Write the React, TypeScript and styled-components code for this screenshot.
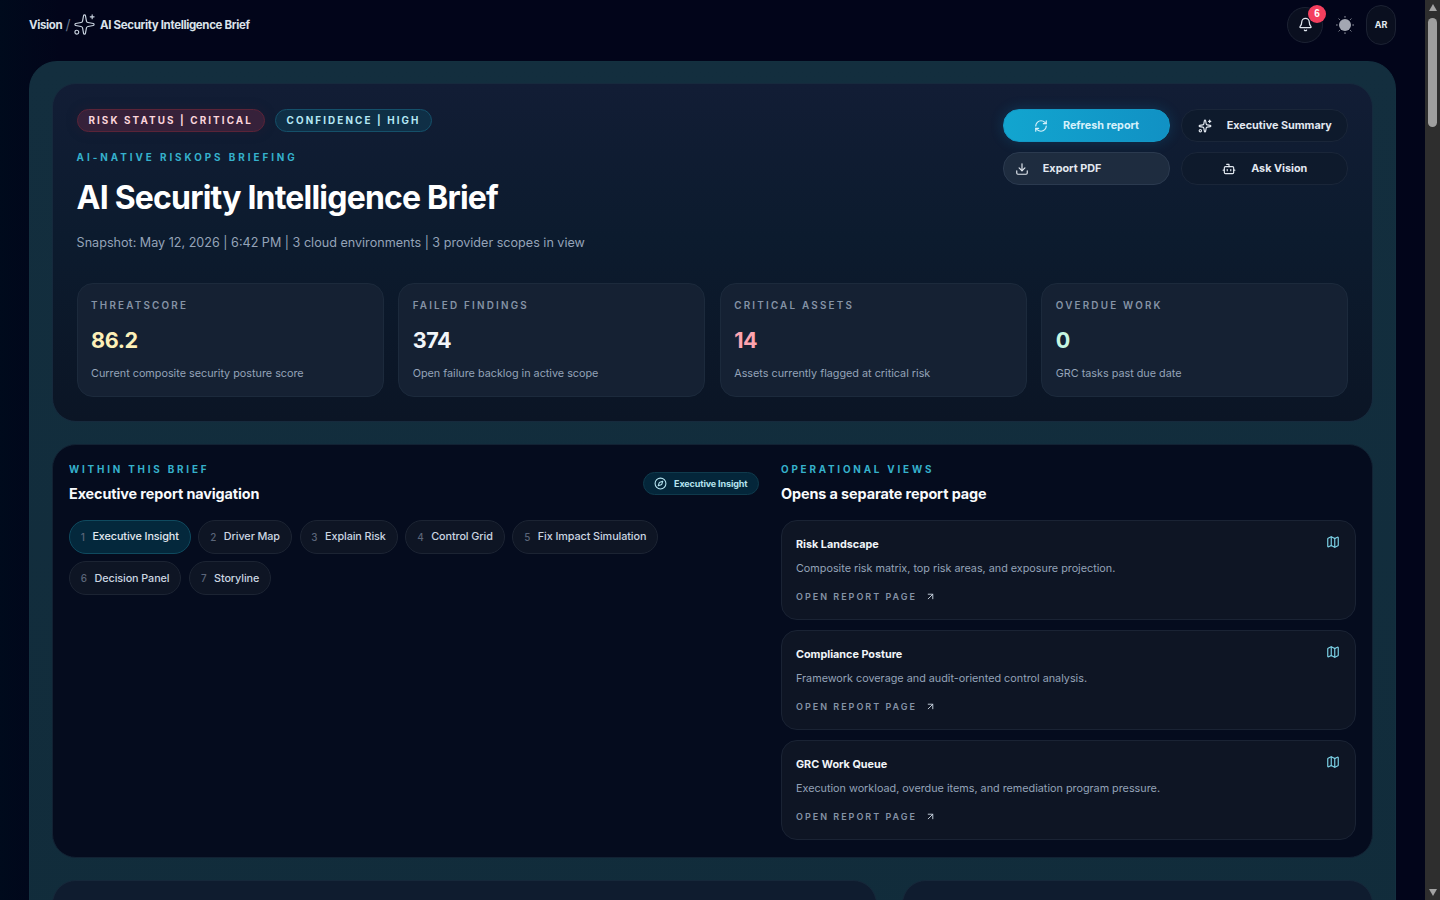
import React from "react";
import styled, { createGlobalStyle } from "styled-components";
import { Sparkles, Bell, RefreshCw, Download, Bot, Compass, Map as MapIcon, ArrowUpRight } from "lucide-react";

const Global = createGlobalStyle`
  html, body { margin: 0; padding: 0; background: #02051a; }
  body { font-family: Inter, "Liberation Sans", sans-serif; color: #e2e8f0; }
  * { box-sizing: border-box; }
`;

const Page = styled.div`
  background: linear-gradient(90deg, #000a1c 0, #02051a 60px, #02051a 100%);
  padding: 0 44px 0 29px;
`;
const ScrollTrack = styled.aside`
  position: fixed;
  top: 0;
  right: 0;
  bottom: 0;
  width: 15px;
  background: #2e2e2e;
  display: flex;
  flex-direction: column;
  align-items: center;
  padding: 4px 0;
`;
const ScrollArrow = styled.span<{ $down?: boolean }>`
  width: 0;
  height: 0;
  border-left: 4.5px solid transparent;
  border-right: 4.5px solid transparent;
  ${p => (p.$down ? "border-top: 7px solid #a3a3a3; margin-top: auto;" : "border-bottom: 7px solid #a3a3a3;")}
`;
const ScrollThumb = styled.span`
  width: 9px;
  height: 109px;
  margin-top: 7px;
  border-radius: 5px;
  background: #9f9f9f;
`;
const TopBar = styled.header`
  height: 61px;
  display: flex;
  align-items: center;
  justify-content: space-between;
  padding-bottom: 12px;
`;
const Crumbs = styled.nav`
  display: flex;
  align-items: center;
  font-size: 11.5px;
  font-weight: 700;
  letter-spacing: -0.35px;
  color: #dbe2ea;
  svg { color: #cbd5e1; margin: 0 4px 0 3px; }
`;
const Slash = styled.span`
  color: #64748b;
  font-weight: 400;
  margin-left: 3px;
  font-size: 14px;
`;
const TopActions = styled.div`
  display: flex;
  align-items: center;
`;
const RoundButton = styled.button`
  position: relative;
  width: 36px;
  height: 36px;
  border-radius: 50%;
  border: 1px solid #1c2233;
  background: #0a0f1f;
  color: #e2e8f0;
  display: grid;
  place-items: center;
  padding: 0;
`;
const Badge = styled.span`
  position: absolute;
  top: -3px;
  right: -4px;
  width: 18px;
  height: 18px;
  border-radius: 50%;
  background: #f43f5e;
  color: #fff;
  font-size: 10px;
  font-weight: 700;
  display: grid;
  place-items: center;
`;
const ThemeToggle = styled.span`
  width: 43px;
  display: grid;
  place-items: center;
`;
const Avatar = styled.div`
  width: 30px;
  height: 40px;
  border-radius: 15px;
  border: 1px solid #1c2233;
  background: #0a0f1f;
  color: #e2e8f0;
  font-size: 9px;
  font-weight: 700;
  display: grid;
  place-items: center;
`;
const Shell = styled.main`
  border-radius: 28px 28px 0 0;
  border: 1px solid #13303f;
  background: linear-gradient(180deg, #132e3e 0, #102b39 100%);
  padding: 21px 21.6px 24px;
  display: flex;
  flex-direction: column;
  gap: 22px;
`;
const Hero = styled.section`
  height: 339px;
  border-radius: 24px;
  border: 1px solid #162a3d;
  background: linear-gradient(180deg, #121d35 0, #0c1b2e 45%, #0b1525 100%);
  padding: 25px 24px 24px;
  display: flex;
  flex-direction: column;
`;
const HeroTop = styled.div`
  display: flex;
  justify-content: space-between;
  height: 174px;
`;
const HeroText = styled.div``;
const Pills = styled.div`
  display: flex;
  gap: 10px;
`;
const Pill = styled.span<{ $tone: "risk" | "info" }>`
  height: 22.5px;
  display: inline-flex;
  align-items: center;
  padding: 0 10.8px;
  border-radius: 12px;
  font-size: 9.9px;
  font-weight: 700;
  letter-spacing: 2.1px;
  border: 1px solid ${p => (p.$tone === "risk" ? "#5b2438" : "#15506a")};
  background: ${p => (p.$tone === "risk" ? "#36213a" : "#0f2f46")};
  color: ${p => (p.$tone === "risk" ? "#fbd5dc" : "#b5e8f5")};
  box-shadow: ${p => (p.$tone === "risk" ? "0 0 12px #3a1c3040" : "none")};
`;
const Eyebrow = styled.div`
  font-size: 9.9px;
  line-height: 12px;
  font-weight: 700;
  letter-spacing: 2.8px;
  color: #35b1cc;
`;
const HeroEyebrow = styled(Eyebrow)`
  margin-top: 19.5px;
  letter-spacing: 2.95px;
`;
const Title = styled.h1`
  margin: 13px 0 0;
  font-size: 32px;
  line-height: 44px;
  font-weight: 700;
  letter-spacing: -0.8px;
  color: #fff;
`;
const Snapshot = styled.p`
  margin: 13px 0 0;
  font-size: 12.6px;
  line-height: 20px;
  color: #94a3b8;
`;
const ActionGrid = styled.div`
  display: grid;
  width: 345.6px;
  grid-template-columns: 1fr 1fr;
  grid-auto-rows: 33px;
  gap: 10px 10.8px;
  align-content: start;
`;
const ActionButton = styled.button<{ $kind: "primary" | "soft" | "ghost" }>`
  border-radius: 16px;
  display: flex;
  align-items: center;
  justify-content: ${p => (p.$kind === "soft" ? "flex-start" : "center")};
  gap: ${p => (p.$kind === "soft" ? 14 : 15)}px;
  padding: 0 11px;
  font: 700 10.8px Inter, sans-serif;
  border: 1px solid ${p => (p.$kind === "primary" ? "#1398c6" : p.$kind === "soft" ? "#2b3a4f" : "#1a2639")};
  background: ${p =>
    p.$kind === "primary"
      ? "linear-gradient(90deg, #12a5cf, #1191c4)"
      : p.$kind === "soft"
        ? "#1e2c3f"
        : "#0e1a2c"};
  color: ${p => (p.$kind === "primary" ? "#d6f1fb" : "#e2e8f0")};
  box-shadow: ${p => (p.$kind === "primary" ? "0 0 14px #0ea5e930" : "none")};
`;
const Metrics = styled.div`
  display: grid;
  grid-template-columns: repeat(4, 1fr);
  gap: 14.4px;
`;
const Metric = styled.article`
  height: 114px;
  border-radius: 16px;
  border: 1px solid #1c2a3c;
  background: #152133;
  padding: 14px 13.5px;
`;
const MetricLabel = styled.div`
  font-size: 9.9px;
  line-height: 14px;
  font-weight: 600;
  letter-spacing: 2.2px;
  color: #8593a6;
`;
const MetricValue = styled.div<{ $color: string }>`
  margin-top: 14px;
  font-size: 21.6px;
  line-height: 28px;
  font-weight: 700;
  letter-spacing: -0.4px;
  color: ${p => p.$color};
`;
const MetricNote = styled.div`
  margin-top: 12px;
  font-size: 10.8px;
  line-height: 16px;
  color: #94a3b8;
`;
const NavPanel = styled.section`
  height: 414px;
  border-radius: 24px;
  border: 1px solid #122233;
  background: #050c1e;
  padding: 18px 16px 16px 16.4px;
  display: grid;
  grid-template-columns: 690px 1fr;
  gap: 22px;
`;
const NavHead = styled.div`
  display: flex;
  justify-content: space-between;
  align-items: center;
`;
const SectionTitle = styled.h2`
  margin: 8px 0 0;
  font-size: 14.4px;
  line-height: 22px;
  font-weight: 700;
  letter-spacing: -0.1px;
  color: #f8fafc;
`;
const CurrentTag = styled.span`
  height: 23px;
  margin-top: -1px;
  display: inline-flex;
  align-items: center;
  gap: 7px;
  padding: 0 10.5px;
  border-radius: 12px;
  border: 1px solid #0f3a4c;
  background: #04263a;
  color: #b5e3ef;
  font-size: 9px;
  font-weight: 700;
  letter-spacing: -0.12px;
`;
const Tabs = styled.div`
  margin-top: 15.2px;
  display: flex;
  flex-wrap: wrap;
  gap: 7.8px;
  max-width: 620px;
`;
const Tab = styled.button<{ $active?: boolean }>`
  height: 33.5px;
  border-radius: 17px;
  padding: 0 10.8px;
  display: inline-flex;
  align-items: center;
  gap: 7.6px;
  font: 500 10.8px Inter, sans-serif;
  letter-spacing: -0.08px;
  border: 1px solid ${p => (p.$active ? "#0f4a5f" : "#1c2433")};
  background: ${p => (p.$active ? "#04283c" : "#0e1524")};
  color: ${p => (p.$active ? "#e2e8f0" : "#cbd5e1")};
`;
const TabIndex = styled.span`
  font-size: 9.9px;
  color: #5b6579;
`;
const ReportList = styled.div`
  margin-top: 15px;
  display: flex;
  flex-direction: column;
  gap: 10.6px;
`;
const ReportCard = styled.a`
  position: relative;
  display: block;
  height: 99.5px;
  border-radius: 16px;
  border: 1px solid #1a2334;
  background: #0e1524;
  padding: 15.5px 14px;
`;
const ReportIcon = styled.span`
  position: absolute;
  top: 14px;
  right: 15px;
  color: #7dd3e8;
  display: flex;
`;
const ReportName = styled.div`
  font-size: 10.8px;
  line-height: 16px;
  font-weight: 700;
  color: #f1f5f9;
`;
const ReportText = styled.div`
  margin-top: 8px;
  font-size: 10.8px;
  line-height: 16px;
  color: #94a3b8;
`;
const ReportLink = styled.div`
  margin-top: 13px;
  display: flex;
  align-items: center;
  gap: 8px;
  font-size: 9px;
  line-height: 14px;
  font-weight: 600;
  letter-spacing: 2px;
  color: #8593a6;
  svg { color: #cbd5e1; }
`;
const LowerRow = styled.div`
  display: grid;
  grid-template-columns: 825px 1fr;
  gap: 25px;
`;
const LowerCard = styled.section`
  min-height: 600px;
  border-radius: 24px;
  border: 1px solid #16283a;
  background: #0f1c2f;
`;

const SunGlyph = () => (
  <svg width="18" height="18" viewBox="0 0 18 18" aria-hidden="true">
    <circle cx="9" cy="9" r="6" fill="#a3a7b2" />
    <g stroke="#a3a7b2" strokeWidth="0.9" strokeLinecap="round">
      <path d="M9 .4v.9M9 16.7v.9M.4 9h.9M16.7 9h.9M2.9 2.9l.6.6M14.5 14.5l.6.6M2.9 15.1l.6-.6M14.5 3.5l.6-.6" />
    </g>
  </svg>
);

const metrics = [
  { label: "THREATSCORE", value: "86.2", color: "#fdf0b8", note: "Current composite security posture score" },
  { label: "FAILED FINDINGS", value: "374", color: "#f1f5f9", note: "Open failure backlog in active scope" },
  { label: "CRITICAL ASSETS", value: "14", color: "#fda4af", note: "Assets currently flagged at critical risk" },
  { label: "OVERDUE WORK", value: "0", color: "#c6f6e2", note: "GRC tasks past due date" },
];
const tabs = ["Executive Insight", "Driver Map", "Explain Risk", "Control Grid", "Fix Impact Simulation", "Decision Panel", "Storyline"];
const reports = [
  { name: "Risk Landscape", text: "Composite risk matrix, top risk areas, and exposure projection." },
  { name: "Compliance Posture", text: "Framework coverage and audit-oriented control analysis." },
  { name: "GRC Work Queue", text: "Execution workload, overdue items, and remediation program pressure." },
];

export default function App() {
  return (
    <>
      <Global />
      <Page>
        <TopBar>
          <Crumbs>
            Vision<Slash>/</Slash>
            <Sparkles size={23} strokeWidth={1.2} />
            AI Security Intelligence Brief
          </Crumbs>
          <TopActions>
            <RoundButton>
              <Bell size={15} />
              <Badge>6</Badge>
            </RoundButton>
            <ThemeToggle><SunGlyph /></ThemeToggle>
            <Avatar>AR</Avatar>
          </TopActions>
        </TopBar>
        <Shell>
          <Hero>
            <HeroTop>
              <HeroText>
                <Pills>
                  <Pill $tone="risk">RISK STATUS | CRITICAL</Pill>
                  <Pill $tone="info">CONFIDENCE | HIGH</Pill>
                </Pills>
                <HeroEyebrow>AI-NATIVE RISKOPS BRIEFING</HeroEyebrow>
                <Title>AI Security Intelligence Brief</Title>
                <Snapshot>Snapshot: May 12, 2026 | 6:42 PM | 3 cloud environments | 3 provider scopes in view</Snapshot>
              </HeroText>
              <ActionGrid>
                <ActionButton $kind="primary"><RefreshCw size={14} />Refresh report</ActionButton>
                <ActionButton $kind="ghost"><Sparkles size={14} />Executive Summary</ActionButton>
                <ActionButton $kind="soft"><Download size={14} />Export PDF</ActionButton>
                <ActionButton $kind="ghost"><Bot size={14} />Ask Vision</ActionButton>
              </ActionGrid>
            </HeroTop>
            <Metrics>
              {metrics.map(m => (
                <Metric key={m.label}>
                  <MetricLabel>{m.label}</MetricLabel>
                  <MetricValue $color={m.color}>{m.value}</MetricValue>
                  <MetricNote>{m.note}</MetricNote>
                </Metric>
              ))}
            </Metrics>
          </Hero>
          <NavPanel>
            <div>
              <NavHead>
                <div>
                  <Eyebrow>WITHIN THIS BRIEF</Eyebrow>
                  <SectionTitle>Executive report navigation</SectionTitle>
                </div>
                <CurrentTag><Compass size={13} />Executive Insight</CurrentTag>
              </NavHead>
              <Tabs>
                {tabs.map((t, i) => (
                  <Tab key={t} $active={i === 0}>
                    <TabIndex>{i + 1}</TabIndex>
                    {t}
                  </Tab>
                ))}
              </Tabs>
            </div>
            <div>
              <Eyebrow>OPERATIONAL VIEWS</Eyebrow>
              <SectionTitle>Opens a separate report page</SectionTitle>
              <ReportList>
                {reports.map(r => (
                  <ReportCard key={r.name}>
                    <ReportIcon><MapIcon size={14} /></ReportIcon>
                    <ReportName>{r.name}</ReportName>
                    <ReportText>{r.text}</ReportText>
                    <ReportLink>OPEN REPORT PAGE <ArrowUpRight size={11} /></ReportLink>
                  </ReportCard>
                ))}
              </ReportList>
            </div>
          </NavPanel>
          <LowerRow>
            <LowerCard />
            <LowerCard />
          </LowerRow>
        </Shell>
      </Page>
      <ScrollTrack>
        <ScrollArrow />
        <ScrollThumb />
        <ScrollArrow $down />
      </ScrollTrack>
    </>
  );
}
